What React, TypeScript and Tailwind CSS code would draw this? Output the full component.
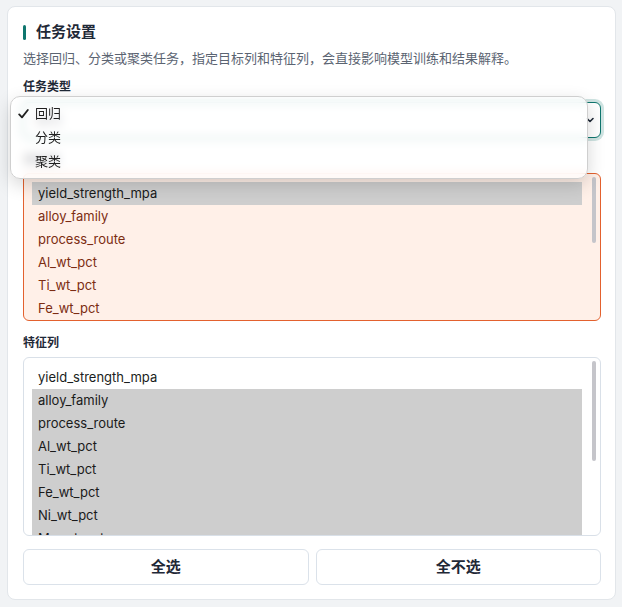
import { useState } from 'react';

const columns = [
  'yield_strength_mpa',
  'alloy_family',
  'process_route',
  'Al_wt_pct',
  'Ti_wt_pct',
  'Fe_wt_pct',
  'Ni_wt_pct',
  'Mn_wt_pct',
  'Cr_wt_pct',
];

const taskTypes = ['回归', '分类', '聚类'];

type ListProps = {
  items: string[];
  selected: string[];
  tone: 'target' | 'feature';
  height: string;
  thumb: string;
};

// Multi-select list box with a thin overlay scrollbar
function ColumnList({ items, selected, tone, height, thumb }: ListProps) {
  const box =
    tone === 'target'
      ? 'border-[#e3612e] bg-[#fff0e8]'
      : 'border-[#d9e0e8] bg-white';
  return (
    <div className={`flex overflow-hidden rounded-md border ${box} ${height}`}>
      <div className="flex-1 pt-2 pl-2">
        {items.map((c) => {
          const on = selected.includes(c);
          const color = on
            ? 'bg-[#cecece] text-[#1a1a1a]'
            : tone === 'target'
            ? 'text-[#7c2d12]'
            : 'text-[#1a1d21]';
          return (
            <div key={c} className={`h-[23px] px-[6px] text-[13px] leading-[23px] ${color}`}>
              {c}
            </div>
          );
        })}
      </div>
      <div className="w-[18px] pt-[3px] pl-[10px]">
        <div className={`w-[4px] rounded-full bg-[#c5c5ca] ${thumb}`} />
      </div>
    </div>
  );
}

export default function App() {
  const [task] = useState('回归');
  const features = columns.slice(1);

  return (
    <div
      className="min-h-screen bg-[#f1f3f5] pt-[6px] pl-[7px]"
      style={{ fontFamily: 'Inter, "Noto Sans CJK SC", sans-serif' }}
    >
      <div className="w-[609px] rounded-lg border border-[#e2e6ea] bg-white pt-[14px] pr-[14px] pb-[14px] pl-[15px]">
        <div className="flex items-center gap-[10px]">
          <span className="h-[15px] w-[3px] rounded-sm bg-[#0f766e]" />
          <h2 className="text-[15px] leading-[22px] font-bold text-[#1f2937]">任务设置</h2>
        </div>
        <p className="mt-[5px] text-[13px] leading-[20px] text-[#5b6472]">
          选择回归、分类或聚类任务，指定目标列和特征列，会直接影响模型训练和结果解释。
        </p>

        <div className="mt-[10px] text-[12px] leading-[18px] font-bold text-[#1f2937]">任务类型</div>
        <div className="relative mt-[6px]">
          <div className="flex h-[36px] items-center justify-between rounded-md border border-[#0f766e] bg-white pr-[4px] pl-[12px] text-[13px] text-[#1f2937] ring-[3px] ring-[#0f766e]/20">
            <span>{task}</span>
            <svg width="12" height="12" viewBox="0 0 12 12" fill="none">
              <path d="M3 4.5l3 3 3-3" stroke="#1f2937" strokeWidth="1.6" strokeLinecap="round" strokeLinejoin="round" />
            </svg>
          </div>

          {/* open popup menu of the task select */}
          <div className="absolute -top-[6px] -left-[13px] z-10 w-[578px] rounded-[10px] border border-[#cfcfcf] bg-white/75 pt-[5px] pb-[4px] shadow-[0_6px_18px_rgba(0,0,0,0.16)] backdrop-blur-[5px]">
            {taskTypes.map((t) => (
              <div key={t} className="flex h-[24px] items-center pl-[7px] text-[13px] text-[#1f1f1f]">
                <span className="flex w-[17px] items-center">
                  {t === task && (
                    <svg width="11" height="10" viewBox="0 0 11 10" fill="none">
                      <path d="M1.2 5.4l2.8 3 5.8-7.4" stroke="#1f1f1f" strokeWidth="1.8" strokeLinecap="round" strokeLinejoin="round" />
                    </svg>
                  )}
                </span>
                {t}
              </div>
            ))}
          </div>
        </div>

        <div className="mt-[13px] text-[12px] leading-[18px] font-bold text-[#1f2937]">目标列</div>
        <div className="mt-[4px]">
          <ColumnList items={columns} selected={['yield_strength_mpa']} tone="target" height="h-[148px]" thumb="h-[66px]" />
        </div>

        <div className="mt-[13px] text-[12px] leading-[18px] font-bold text-[#1f2937]">特征列</div>
        <div className="mt-[5px]">
          <ColumnList items={columns} selected={features} tone="feature" height="h-[179px]" thumb="h-[100px]" />
        </div>

        <div className="mt-[13px] grid grid-cols-2 gap-[7px]">
          <button className="h-[36px] rounded-md border border-[#dbe2ea] bg-white text-[15px] font-bold text-[#1f2937]">
            全选
          </button>
          <button className="h-[36px] rounded-md border border-[#dbe2ea] bg-white text-[15px] font-bold text-[#1f2937]">
            全不选
          </button>
        </div>
      </div>
    </div>
  );
}
